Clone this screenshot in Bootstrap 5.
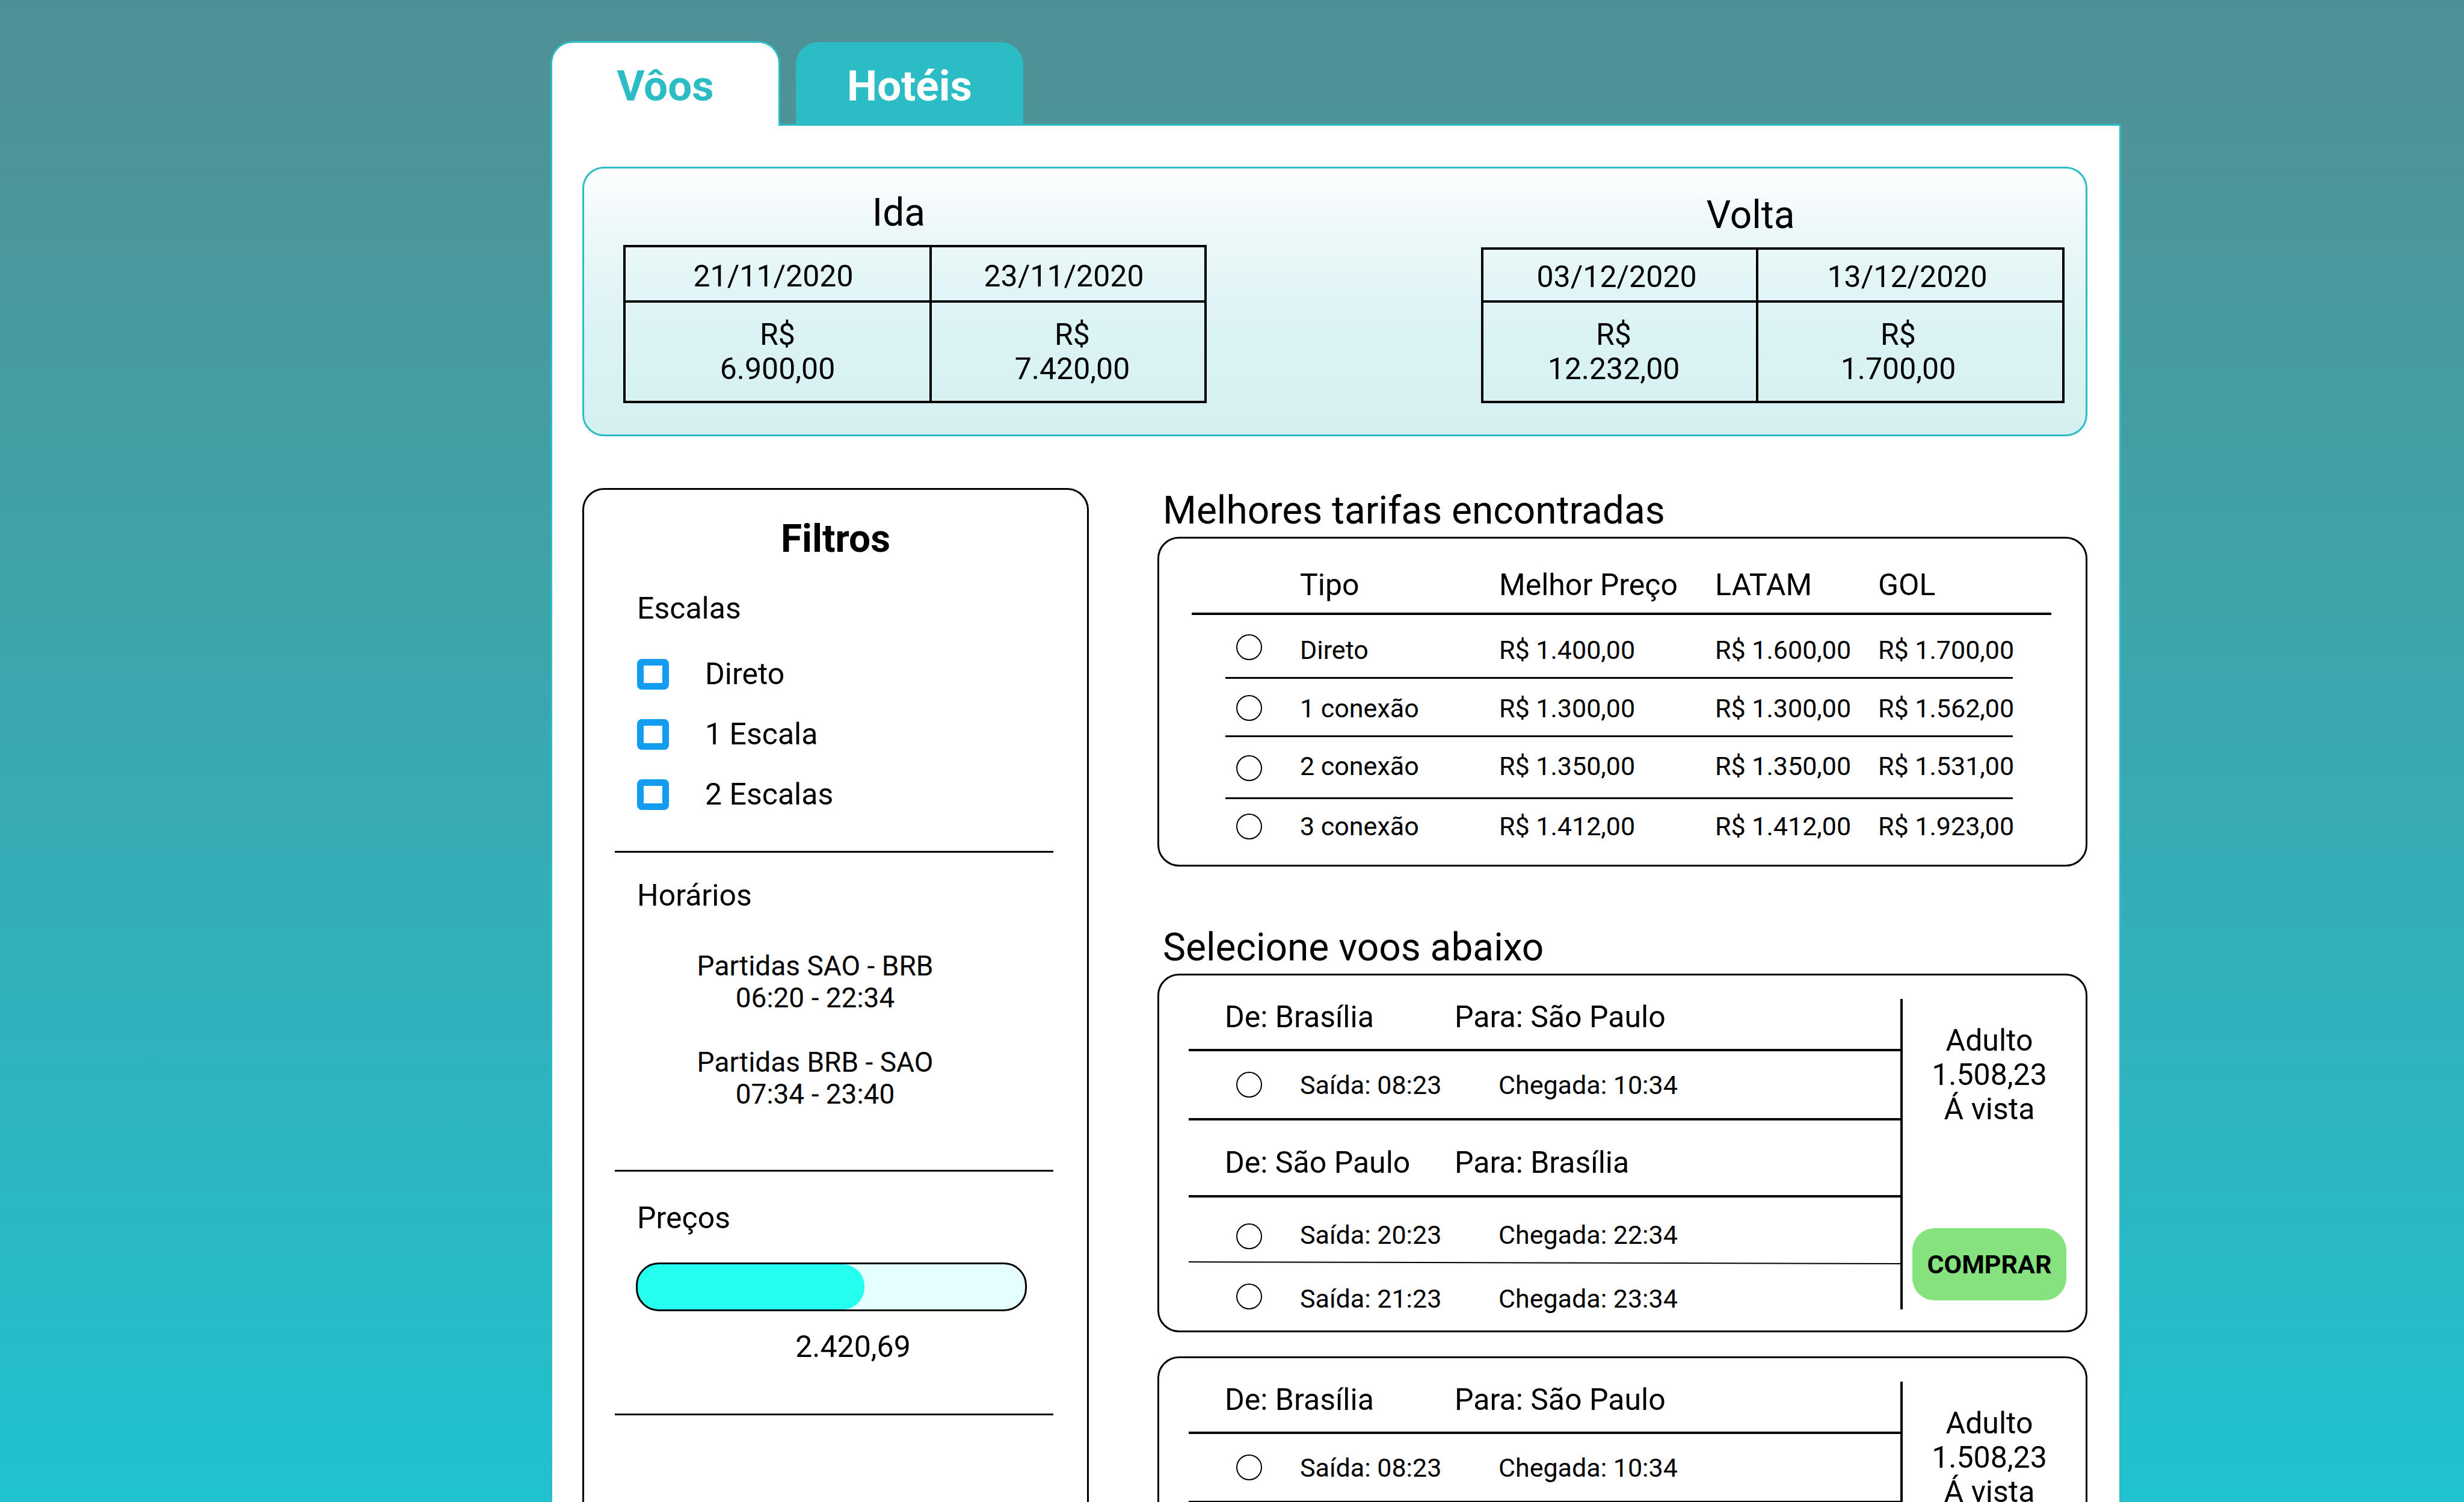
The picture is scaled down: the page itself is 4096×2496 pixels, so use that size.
<!DOCTYPE html>
<html lang="pt-BR">
<head>
<meta charset="utf-8">
<meta name="viewport" content="width=device-width, initial-scale=1">
<title>Passagens aéreas</title>
<link href="https://cdn.jsdelivr.net/npm/bootstrap@5.3.0/dist/css/bootstrap.min.css" rel="stylesheet">
<style>
  :root { --teal: #2bbcc5; --edge: 3px; }
  body { font-family: Roboto, "Liberation Sans", sans-serif; font-size: 50px; line-height: 56px; color: #000; background: #21c1ce; }
  .screen { height: 100vh; overflow: hidden auto; scrollbar-width: none; background: linear-gradient(#509094, #4a979b 15%, #20c2cf); padding: 68px 570px 0 915px; }
  .screen::-webkit-scrollbar { display: none; }

  /* tabs */
  .tab-bar { gap: 26px; }
  .tab-link { width: 378px; font-size: 71px; line-height: 72px; font-weight: 700; text-align: center; text-decoration: none; padding: 34px 0 27px; border: var(--edge) solid var(--teal); border-bottom: 0; border-radius: 37px 37px 0 0; color: #fff; background: var(--teal); }
  .tab-link.is-active { width: 382px; color: var(--teal); background: #fff; margin-bottom: calc(-1 * var(--edge)); padding: 36px 0 30px; z-index: 1; }
  .sheet { background: #fff; border: var(--edge) solid var(--teal); padding: 68px 53px 40px 50px; }

  /* outlined boxes */
  .box { border: var(--edge) solid #000; border-radius: 36px; }
  .heading { font-size: 64px; line-height: 74px; font-weight: 400; margin: 0; }

  /* date and price summary */
  .summary { border-color: var(--teal); background: linear-gradient(#fff, #edf8fa 22%, #dbf3f4 62%, #d5f0f0); height: 448px; padding: 0 35px 52px 65px; margin-bottom: 86px; }
  .dates { border-collapse: collapse; table-layout: fixed; width: 970px; text-align: center; }
  .dates th, .dates td { border: 4px solid #000; font-weight: 400; line-height: 57px; padding: 0; }
  .dates th { height: 92px; padding: 8px 14px 0 0; }
  .dates td { height: 167px; }
  .dates td:last-child { padding-left: 14px; }
  .dates .wide { width: 509px; }
  .dates-back th { height: 88px; padding: 6px 10px 0 0; }
  .dates-back td { padding-right: 20px; }
  .dates-back td:last-child { padding: 0 40px 0 0; }
  .trip-title { margin-bottom: 16px; padding-right: 54px; text-align: center; }
  .trip-back { padding-right: 74px; }

  /* filters */
  .filters { width: 842px; flex: none; padding-top: 45px; }
  .filter-part { padding: 0 100px 0 88px; }
  .stops { gap: 44px; margin: 53px 0 66px; }
  .stops label { margin-left: 60px; }
  .rule-line { border: 0; height: 3px; background: #000; opacity: 1; margin: 0 56px 0 51px; }
  .tick { appearance: none; width: 53px; height: 51px; border: 11px solid #149cf1; border-radius: 8px; background: #fff; margin: 0; }
  .tick:checked { background: #149cf1; }
  .hours { font-size: 46px; line-height: 53px; text-align: center; padding-right: 68px; }
  .price-range { appearance: none; display: block; width: calc(100% + 2px); margin: 46px 0 31px -2px; height: 81px; border: var(--edge) solid #000; border-radius: 38px; background: linear-gradient(90deg, #25fff0 52%, #e4fffd 52%); }
  .price-range::-webkit-slider-thumb { appearance: none; width: 75px; height: 75px; border-radius: 36px; background: #25fff0; border: 0; }

  /* fares */
  .results { margin-left: 114px; min-width: 0; }
  .results .heading { padding-left: 9px; margin: 1px 0 6px; }
  .fare-box { padding: 0 57px 19px 54px; margin-bottom: 98px; }
  .fares { border-collapse: separate; border-spacing: 0; table-layout: fixed; width: 100%; }
  .fares th { height: 127px; border-bottom: 4px solid #000; vertical-align: bottom; padding: 0 0 18px; font-weight: 400; }
  .fares td { height: 103px; padding: 0; font-size: 43px; line-height: 50px; }
  .fares tbody tr:not(:last-child) { background: linear-gradient(#000, #000) 56px 100% / calc(100% - 120px) 3px no-repeat; }
  .fares tbody tr:first-child td { height: 106px; }
  .fares tbody tr:first-child td:not(:first-child) { padding-top: 10px; }
  .fares tbody tr:nth-child(2) td { height: 97px; }
  .fares tbody tr:nth-child(3) td:not(:first-child) { padding-bottom: 8px; }
  .fares tbody tr:last-child td { height: 90px; }
  .dot { appearance: none; display: block; flex: none; width: 43px; height: 43px; border: 2px solid #000; border-radius: 50%; background: #fff; margin: 0; }
  .dot:checked { box-shadow: inset 0 0 0 9px #fff; background: #000; }
  .fares .dot { margin-left: 74px; }

  /* flights */
  .flight { padding: 39px 32px 35px 49px; margin-bottom: 40px; }
  .legs { border-right: 4px solid #000; min-height: 516px; }
  .route { border-bottom: 4px solid #000; height: 87px; padding: 2px 0 0 60px; }
  .route-back { height: 128px; padding-top: 42px; }
  .route span { width: 382px; }
  .slot { font-size: 43px; line-height: 36px; padding-left: 79px; height: 75px; }
  .slot label { width: 330px; }
  .slot .dot { margin-right: 63px; }
  .slot-single { height: 115px; border-bottom: 4px solid #000; }
  .slot-first { height: 106px; padding-top: 18px; }
  .slot-first .dot { margin-top: 4px; }
  .thin-line { display: block; height: 5px; }
  .offer { width: 272px; flex: none; padding: 41px 0 15px 16px; line-height: 57px; text-align: center; }
  .buy { height: 120px; border: 0; border-radius: 37px; background: #86e27f; color: #000; font-size: 43px; line-height: 50px; font-weight: 700; padding: 0; }
  .buy:hover { background: #74d66d; color: #000; }
</style>
</head>
<body>
<div class="screen">
  <nav class="tab-bar d-flex align-items-end position-relative">
    <a class="tab-link is-active position-relative" href="#voos" aria-current="page">Vôos</a>
    <a class="tab-link" href="#hoteis">Hotéis</a>
  </nav>

  <main class="sheet" id="voos">
    <section class="box summary d-flex justify-content-between align-items-end">
      <div>
        <h2 class="heading trip-title">Ida</h2>
        <table class="dates">
          <thead><tr><th class="wide" scope="col">21/11/2020</th><th scope="col">23/11/2020</th></tr></thead>
          <tbody><tr><td>R$<br>6.900,00</td><td>R$<br>7.420,00</td></tr></tbody>
        </table>
      </div>
      <div>
        <h2 class="heading trip-title trip-back">Volta</h2>
        <table class="dates dates-back">
          <thead><tr><th scope="col">03/12/2020</th><th class="wide" scope="col">13/12/2020</th></tr></thead>
          <tbody><tr><td>R$<br>12.232,00</td><td>R$<br>1.700,00</td></tr></tbody>
        </table>
      </div>
    </section>

    <div class="d-flex">
      <aside class="box filters">
        <h2 class="heading fw-bold text-center">Filtros</h2>
        <div class="filter-part" style="margin-top: 50px">
          <div>Escalas</div>
          <div class="stops d-flex flex-column">
            <div class="d-flex align-items-center"><input class="tick" type="checkbox" id="stop0"><label for="stop0">Direto</label></div>
            <div class="d-flex align-items-center"><input class="tick" type="checkbox" id="stop1"><label for="stop1">1 Escala</label></div>
            <div class="d-flex align-items-center"><input class="tick" type="checkbox" id="stop2"><label for="stop2">2 Escalas</label></div>
          </div>
        </div>
        <hr class="rule-line">
        <div class="filter-part" style="padding-top: 43px">Horários</div>
        <div class="hours" style="margin: 63px 0 99px">
          <div>Partidas SAO - BRB<br>06:20 - 22:34</div>
          <div style="margin-top: 54px">Partidas BRB - SAO<br>07:34 - 23:40</div>
        </div>
        <hr class="rule-line">
        <div class="filter-part" style="padding-top: 49px; margin-bottom: 83px">
          <label class="d-block" for="price">Preços</label>
          <input class="price-range" type="range" id="price" min="0" max="4555" step="0.01" value="2420.69">
          <output class="d-block text-center" for="price" style="padding-left: 70px">2.420,69</output>
        </div>
        <hr class="rule-line">
      </aside>

      <div class="results flex-grow-1">
        <h2 class="heading">Melhores tarifas encontradas</h2>
        <section class="box fare-box">
          <table class="fares">
            <colgroup><col style="width: 180px"><col style="width: 331px"><col style="width: 359px"><col style="width: 271px"><col></colgroup>
            <thead><tr><th></th><th scope="col">Tipo</th><th scope="col">Melhor Preço</th><th scope="col">LATAM</th><th scope="col">GOL</th></tr></thead>
            <tbody>
              <tr><td><input class="dot" type="radio" name="fare" id="fare0"></td><td><label for="fare0">Direto</label></td><td>R$ 1.400,00</td><td>R$ 1.600,00</td><td>R$ 1.700,00</td></tr>
              <tr><td><input class="dot" type="radio" name="fare" id="fare1"></td><td><label for="fare1">1 conexão</label></td><td>R$ 1.300,00</td><td>R$ 1.300,00</td><td>R$ 1.562,00</td></tr>
              <tr><td><input class="dot" type="radio" name="fare" id="fare2"></td><td><label for="fare2">2 conexão</label></td><td>R$ 1.350,00</td><td>R$ 1.350,00</td><td>R$ 1.531,00</td></tr>
              <tr><td><input class="dot" type="radio" name="fare" id="fare3"></td><td><label for="fare3">3 conexão</label></td><td>R$ 1.412,00</td><td>R$ 1.412,00</td><td>R$ 1.923,00</td></tr>
            </tbody>
          </table>
        </section>

        <h2 class="heading">Selecione voos abaixo</h2>
        <article class="box flight d-flex">
          <div class="legs flex-grow-1">
            <div class="route d-flex"><span>De: Brasília</span><span>Para: São Paulo</span></div>
            <div class="slot slot-single d-flex align-items-center"><input class="dot" type="radio" name="out1" id="out1a"><label for="out1a">Saída: 08:23</label><span>Chegada: 10:34</span></div>
            <div class="route route-back d-flex"><span>De: São Paulo</span><span>Para: Brasília</span></div>
            <div class="slot slot-first d-flex align-items-center"><input class="dot" type="radio" name="back1" id="back1a"><label for="back1a">Saída: 20:23</label><span>Chegada: 22:34</span></div>
            <svg class="thin-line w-100" viewBox="0 0 1184 5" preserveAspectRatio="none" aria-hidden="true"><path d="M0 1L1184 4" stroke="#000" stroke-width="2"/></svg>
            <div class="slot d-flex align-items-end"><input class="dot" type="radio" name="back1" id="back1b"><label for="back1b">Saída: 21:23</label><span>Chegada: 23:34</span></div>
          </div>
          <div class="offer d-flex flex-column">
            <div>Adulto<br>1.508,23<br>Á vista</div>
            <button class="buy btn mt-auto" type="button">COMPRAR</button>
          </div>
        </article>

        <article class="box flight d-flex">
          <div class="legs flex-grow-1">
            <div class="route d-flex"><span>De: Brasília</span><span>Para: São Paulo</span></div>
            <div class="slot slot-single d-flex align-items-center"><input class="dot" type="radio" name="out2" id="out2a"><label for="out2a">Saída: 08:23</label><span>Chegada: 10:34</span></div>
          </div>
          <div class="offer">Adulto<br>1.508,23<br>Á vista</div>
        </article>
      </div>
    </div>
  </main>
</div>
<script src="https://cdn.jsdelivr.net/npm/bootstrap@5.3.0/dist/js/bootstrap.bundle.min.js"></script>
</body>
</html>
